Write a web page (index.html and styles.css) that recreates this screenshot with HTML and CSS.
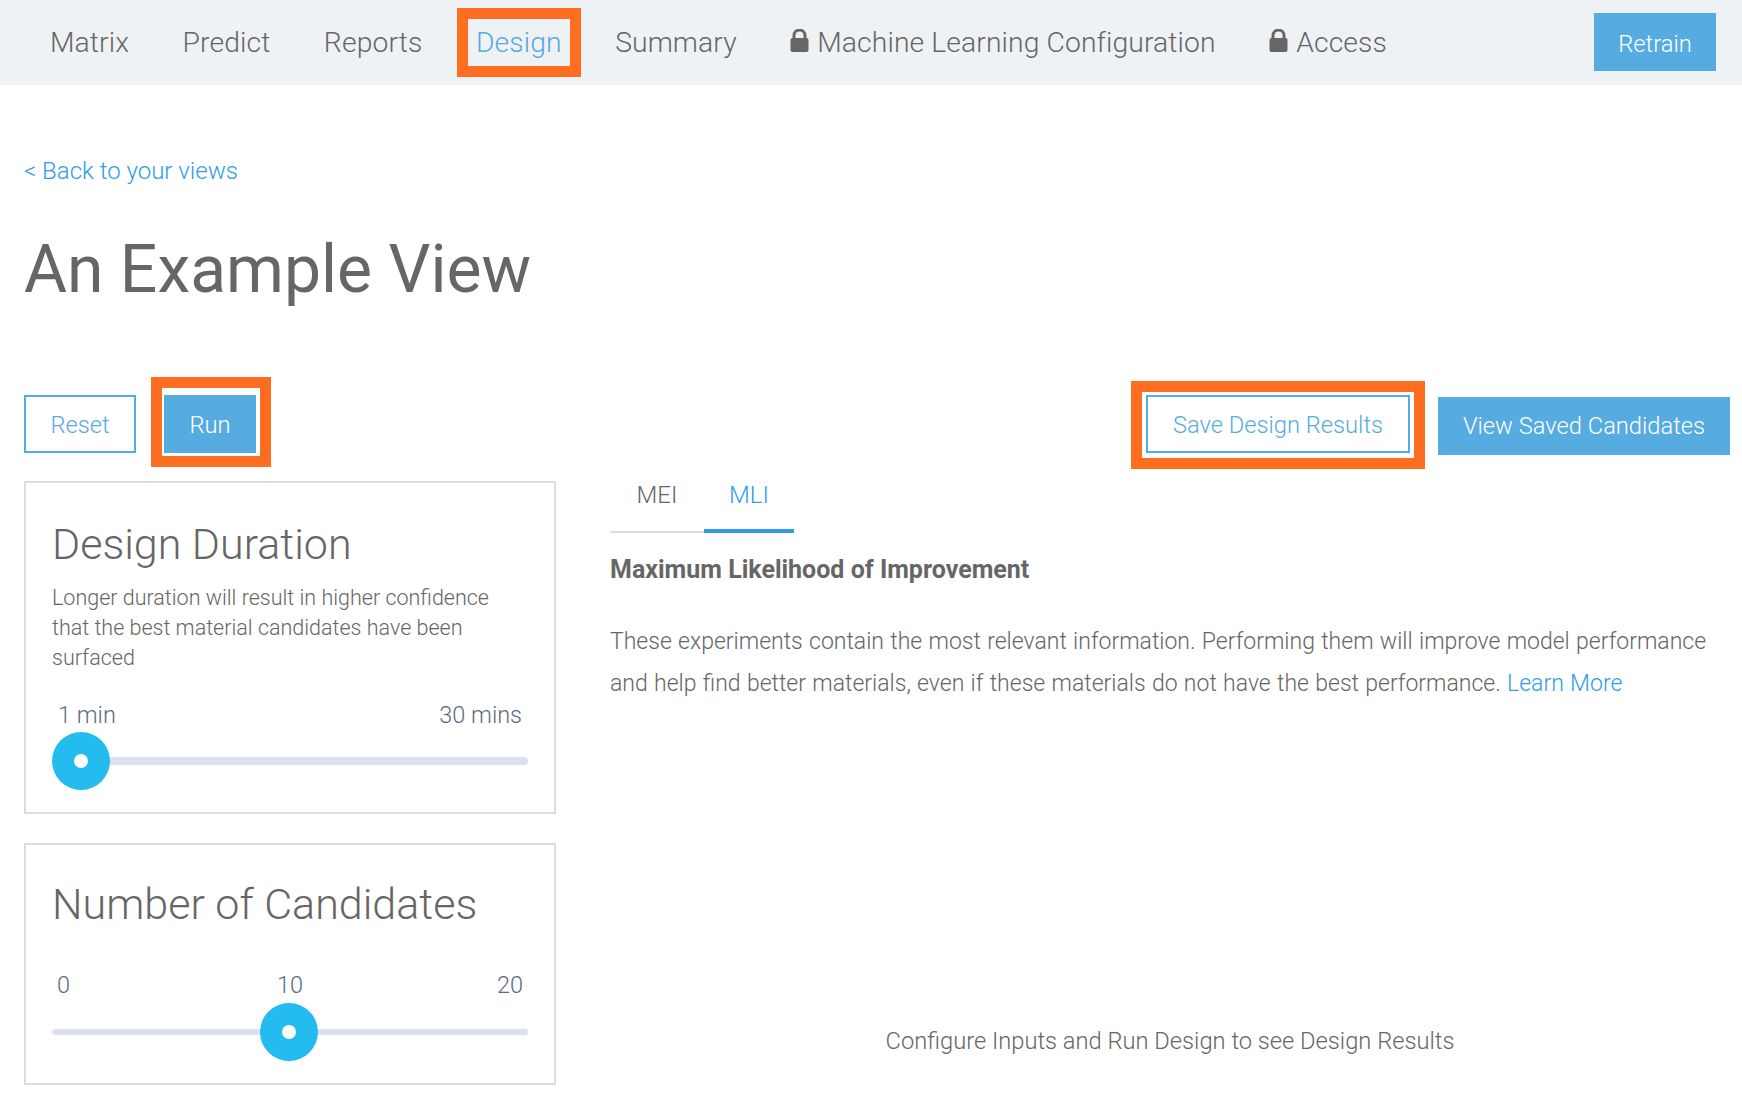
FILE: index.html
```html
<!DOCTYPE html>
<html lang="en">
<head>
<meta charset="utf-8">
<title>An Example View</title>
<link rel="stylesheet" href="styles.css">
</head>
<body>
<nav class="nav">
  <a class="nav-item">Matrix</a>
  <a class="nav-item">Predict</a>
  <a class="nav-item">Reports</a>
  <a class="nav-item nav-active hl hl-nav">Design</a>
  <a class="nav-item">Summary</a>
  <a class="nav-item"><svg class="lock" viewBox="0 0 19 23"><path d="M4 10V6.5a5.5 5.5 0 0 1 11 0V10" fill="none" stroke="#666" stroke-width="3"/><rect x="0.5" y="9" width="18" height="14" rx="2" fill="#666"/></svg>Machine Learning Configuration</a>
  <a class="nav-item"><svg class="lock" viewBox="0 0 19 23"><path d="M4 10V6.5a5.5 5.5 0 0 1 11 0V10" fill="none" stroke="#666" stroke-width="3"/><rect x="0.5" y="9" width="18" height="14" rx="2" fill="#666"/></svg>Access</a>
  <button class="btn btn-solid btn-retrain">Retrain</button>
</nav>
<main class="main">
  <a class="back">&lt; Back to your views</a>
  <h1 class="title">An Example View</h1>
  <div class="toolbar">
    <div class="toolbar-group">
      <button class="btn btn-outline btn-reset">Reset</button>
      <button class="btn btn-solid btn-run hl hl-run">Run</button>
    </div>
    <div class="toolbar-group">
      <button class="btn btn-outline btn-save hl hl-save">Save Design Results</button>
      <button class="btn btn-solid btn-view">View Saved Candidates</button>
    </div>
  </div>
  <div class="columns">
    <aside class="side">
      <section class="card card-duration">
        <h2 class="card-title">Design Duration</h2>
        <p class="card-desc">Longer duration will result in higher confidence that the best material candidates have been surfaced</p>
        <div class="labels"><span>1 min</span><span>30 mins</span></div>
        <div class="slider slider-thick"><span class="thumb thumb-start"></span></div>
      </section>
      <section class="card card-count">
        <h2 class="card-title">Number of Candidates</h2>
        <div class="labels labels-count"><span>0</span><span>10</span><span class="label-end">20</span></div>
        <div class="slider"><span class="thumb thumb-mid"></span></div>
      </section>
    </aside>
    <section class="content">
      <div class="tabs">
        <a class="tab">MEI</a>
        <a class="tab tab-active">MLI</a>
      </div>
      <h3 class="content-heading">Maximum Likelihood of Improvement</h3>
      <p class="content-text">These experiments contain the most relevant information. Performing them will improve model performance and help find better materials, even if these materials do not have the best performance. <a class="link">Learn More</a></p>
      <p class="hint">Configure Inputs and Run Design to see Design Results</p>
    </section>
  </div>
</main>
</body>
</html>
```
FILE: styles.css
```css
* { box-sizing: border-box; }
html, body { margin: 0; height: 1100px; overflow: hidden; }
body { background: #fff; color: #666; font-family: Roboto, "Liberation Sans", sans-serif; font-weight: 300; }
p, h1, h2, h3 { margin: 0; font-weight: 300; }

.nav { height: 85px; background: #eff2f5; display: flex; align-items: center; padding: 0 26px 1px 50px; gap: 53.5px; }
.nav-item { font-size: 28.3px; letter-spacing: 0.1px; color: #666; display: flex; align-items: center; position: relative; }
.nav-active { color: #56abe0; }
.lock { width: 19px; height: 23px; margin-right: 8px; margin-top: -3px; }

.hl { position: relative; }
.hl::after { content: ""; position: absolute; border: 11px solid #ff6d21; background: transparent; pointer-events: none; }
.hl-nav::after { left: -19px; right: -19px; top: -18px; bottom: -18px; }
.hl-run::after { left: -13px; right: -15px; top: -18px; bottom: -14px; }
.hl-save::after { left: -17px; right: -17px; top: -16px; bottom: -18px; }

.btn { font: inherit; font-size: 23.7px; height: 58px; border-radius: 0; cursor: pointer; padding: 1px 0 0; }
.btn-solid { background: #56abe0; color: #fff; border: 0; }
.btn-outline { background: #fff; color: #56abe0; border: 2px solid #56abe0; }
.btn-retrain { width: 122px; margin-left: auto; padding-top: 4px; }
.btn-reset { width: 112px; }
.btn-run { width: 92px; }
.btn-save { width: 264px; padding-top: 2px; }
.btn-view { width: 292px; margin-top: 2px; padding-top: 0; }

.main { padding: 0 12px 0 24px; }
.back { display: block; color: #2e9cec; font-size: 24px; line-height: 30px; margin-top: 71px; }
.title { font-size: 66px; font-weight: 400; line-height: 80px; margin-top: 44px; color: #666; }

.toolbar { display: flex; justify-content: space-between; margin-top: 85px; }
.toolbar-group { display: flex; align-items: flex-start; gap: 28px; }

.columns { display: grid; grid-template-columns: 532px 1fr; column-gap: 54px; margin-top: 26px; }
.side { display: flex; flex-direction: column; gap: 29px; }
.card { border: 2px solid #ddd; padding: 0 26px; }
.card-duration { height: 333px; }
.card-count { height: 242px; }
.card-title { font-size: 43px; line-height: 52px; margin-top: 35px; color: #666; }
.card-count .card-title { margin-top: 33px; }
.card-desc { font-size: 21.5px; line-height: 30px; margin-top: 13px; }
.labels { display: flex; justify-content: space-between; font-size: 23.5px; line-height: 30px; color: #5c6b85; padding: 0 6px; margin-top: 27px; }
.labels-count { display: grid; grid-template-columns: 1fr auto 1fr; margin-top: 40px; padding: 0 5px; }
.label-end { text-align: right; }
.slider { position: relative; height: 6px; background: #dbe1f2; border-radius: 4px; margin-top: 29px; }
.slider-thick { height: 8px; margin-top: 27px; }
.thumb { position: absolute; top: 50%; width: 58px; height: 58px; margin-top: -29px; border-radius: 50%; background: #24bcef; display: flex; align-items: center; justify-content: center; }
.thumb::after { content: ""; width: 14px; height: 14px; border-radius: 50%; background: #fff; }
.thumb-start { left: 0; }
.thumb-mid { left: calc(50% - 30px); }

.content { display: flex; flex-direction: column; margin-top: -1px; }
.tabs { display: flex; height: 53px; }
.tab { font-size: 24px; line-height: 30px; height: 53px; border-bottom: 2px solid #ddd; color: #666; text-align: center; width: 94px; }
.tab-active { width: 90px; color: #2e9cec; border-bottom: 4px solid #2e9cec; }
.content-heading { font-size: 25px; font-weight: 700; line-height: 30px; margin-top: 22px; color: #666; }
.content-text { font-size: 23px; word-spacing: 0.7px; line-height: 42px; margin-top: 36px; }
.link { color: #2e9cec; }
.hint { font-size: 23.7px; line-height: 30px; text-align: center; margin-top: auto; margin-bottom: 29px; }
```
